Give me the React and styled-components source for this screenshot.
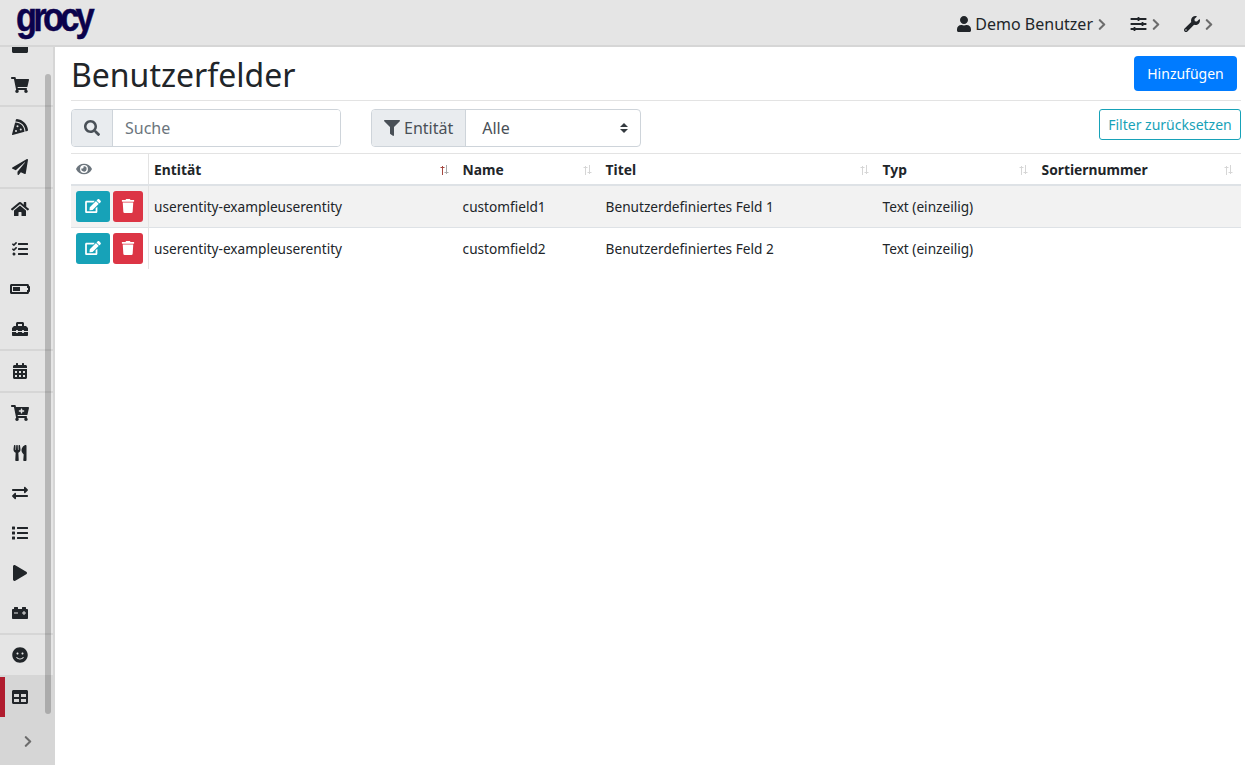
import React from 'react'
import styled, {createGlobalStyle} from 'styled-components'
import {
  FaBox, FaShoppingCart, FaPizzaSlice, FaPaperPlane, FaHome, FaTasks, FaBatteryHalf, FaToolbox,
  FaCalendarAlt, FaCartPlus, FaUtensils, FaExchangeAlt, FaList, FaPlay, FaCarBattery, FaSmile, FaTable,
  FaUser, FaSlidersH, FaWrench, FaChevronRight, FaSearch, FaFilter, FaEye, FaEdit, FaTrash
} from 'react-icons/fa'

const GlobalStyle = createGlobalStyle`
  html, body {
    margin: 0;
    padding: 0;
    height: 100%;
    overflow: hidden;
    background: #fff;
    color: #212529;
    font-family: "Noto Sans", "Open Sans", sans-serif;
    font-size: 14px;
  }
  * { box-sizing: border-box; }
`

const navGroups = [
  [FaBox, FaShoppingCart],
  [FaPizzaSlice, FaPaperPlane],
  [FaHome, FaTasks, FaBatteryHalf, FaToolbox],
  [FaCalendarAlt],
  [FaCartPlus, FaUtensils, FaExchangeAlt, FaList, FaPlay, FaCarBattery],
  [FaSmile],
]

const columns = [
  {title: 'Entität', width: 309, active: true},
  {title: 'Name', width: 143},
  {title: 'Titel', width: 277},
  {title: 'Typ', width: 159},
  {title: 'Sortiernummer', width: 205},
]

const rows = [
  ['userentity-exampleuserentity', 'customfield1', 'Benutzerdefiniertes Feld 1', 'Text (einzeilig)', ''],
  ['userentity-exampleuserentity', 'customfield2', 'Benutzerdefiniertes Feld 2', 'Text (einzeilig)', ''],
]

export default function App() {
  return (
    <Page>
      <GlobalStyle />
      <Navbar>
        <Logo>grocy</Logo>
        <NavRight>
          <NavLink $iconWidth={14}><FaUser /><span>Demo Benutzer</span><Chevron /></NavLink>
          <NavLink $iconWidth={17}><FaSlidersH /><Chevron /></NavLink>
          <NavLink $iconWidth={16}><FaWrench /><Chevron /></NavLink>
        </NavRight>
      </Navbar>
      <Body>
        <Sidebar>
          <NavList>
            {navGroups.map((group, i) => (
              <NavGroup key={i}>
                {group.map((Icon, j) => (
                  <NavItem key={j}><Icon /></NavItem>
                ))}
              </NavGroup>
            ))}
            <ActiveItem><FaTable /></ActiveItem>
          </NavList>
          <Collapse><FaChevronRight /></Collapse>
          <ScrollThumb />
        </Sidebar>
        <Main>
          <TitleRow>
            <Title>Benutzerfelder</Title>
            <PrimaryButton>Hinzufügen</PrimaryButton>
          </TitleRow>
          <FilterRow>
            <InputGroup>
              <Addon><FaSearch /></Addon>
              <SearchInput placeholder="Suche" />
            </InputGroup>
            <InputGroup>
              <Addon><FaFilter /><span>Entität</span></Addon>
              <SelectBox>
                <span>Alle</span>
                <svg width="8" height="10" viewBox="0 0 4 5">
                  <path fill="#343a40" d="M2 0L0 2h4zm0 5L0 3h4z" />
                </svg>
              </SelectBox>
            </InputGroup>
            <ResetButton>Filter zurücksetzen</ResetButton>
          </FilterRow>
          <Table>
            <thead>
              <tr>
                <OptionsHead><FaEye /></OptionsHead>
                {columns.map(c => (
                  <HeadCell key={c.title} style={{width: c.width}}>
                    {c.title}
                    <SortIcon active={c.active} />
                  </HeadCell>
                ))}
              </tr>
            </thead>
            <tbody>
              {rows.map((row, i) => (
                <Row key={i} $odd={i === 0}>
                  <ActionCell>
                    <Actions>
                      <IconButton $color="#17a2b8"><FaEdit /></IconButton>
                      <IconButton $color="#dc3545" $narrow><FaTrash /></IconButton>
                    </Actions>
                  </ActionCell>
                  {row.map((cell, j) => <Cell key={j}>{cell}</Cell>)}
                </Row>
              ))}
            </tbody>
          </Table>
        </Main>
      </Body>
    </Page>
  )
}

function Chevron() {
  return <ChevronWrap><FaChevronRight /></ChevronWrap>
}

function SortIcon({active}) {
  return (
    <SortSvg width="9" height="10" viewBox="0 0 9 10" fill="none" strokeWidth="1">
      <path d="M2.5 10V1M0.5 2.5h4" stroke={active ? '#a5473f' : '#d6d6d6'} />
      <path d="M6.5 0v9M4.5 7.5h4" stroke={active ? '#aaa' : '#d6d6d6'} />
    </SortSvg>
  )
}

const Page = styled.div`
  width: 1245px;
  height: 765px;
  display: flex;
  flex-direction: column;
  overflow: hidden;
`

const Navbar = styled.header`
  height: 47px;
  flex: none;
  display: flex;
  align-items: center;
  justify-content: space-between;
  background: #e5e5e5;
  border-bottom: 2px solid #d6d6d6;
  padding: 3px 32px 0 16px;
`

const Logo = styled.div`
  align-self: flex-start;
  margin-top: -1.5px;
  height: 30px;
  font-family: "Liberation Sans", sans-serif;
  font-weight: 700;
  font-size: 41px;
  letter-spacing: -4.5px;
  line-height: 30px;
  color: #0b024c;
  -webkit-text-stroke: 0.5px #0b024c;
  transform: scaleX(0.84);
  transform-origin: left center;
`

const NavRight = styled.div`
  display: flex;
  align-items: center;
  gap: 24px;
`

const NavLink = styled.div`
  display: flex;
  align-items: center;
  gap: 4px;
  font-size: 16px;
  color: #212529;

  > svg {
    height: 16px;
    width: ${props => props.$iconWidth}px;
    display: block;
  }
`

const ChevronWrap = styled.span`
  display: inline-flex;
  color: #6c6c6c;
  margin-left: 1px;

  svg {
    width: 8px;
    height: 13px;
  }
`

const Body = styled.div`
  flex: 1;
  display: flex;
  min-height: 0;
`

const Sidebar = styled.nav`
  position: relative;
  width: 55px;
  flex: none;
  background: #e5e5e5;
  border-right: 2px solid #d6d6d6;
  overflow: hidden;
`

const NavList = styled.div`
  margin-top: -22px;
`

const NavGroup = styled.div`
  border-bottom: 2px solid #d6d6d6;
`

const NavItem = styled.div`
  height: 40px;
  width: 40px;
  display: flex;
  align-items: center;
  justify-content: center;
  color: #212529;

  svg {
    height: 16px;
    width: 20px;
  }
`

const ActiveItem = styled(NavItem)`
  width: 55px;
  padding-right: 15px;
  background: #d6d6d6;
  position: relative;

  &::before {
    content: "";
    position: absolute;
    left: 0;
    top: 0;
    width: 5px;
    height: 40px;
    background: #b01c2e;
  }
`

const Collapse = styled.div`
  height: 48px;
  background: #d6d6d6;
  color: #6c6c6c;
  display: flex;
  align-items: center;
  justify-content: center;
  padding-left: 2px;

  svg {
    width: 8px;
    height: 13px;
  }
`

const ScrollThumb = styled.div`
  position: absolute;
  left: 45px;
  top: 27px;
  width: 6px;
  height: 640px;
  border-radius: 3px;
  background: rgba(0, 0, 0, 0.2);
`

const Main = styled.main`
  flex: 1;
  min-width: 0;
  padding: 0 4px 0 16px;
`

const TitleRow = styled.div`
  height: 54px;
  display: flex;
  align-items: flex-start;
  justify-content: space-between;
  border-bottom: 1px solid #e3e3e3;
  padding-right: 4px;
  padding-top: 9px;
`

const Title = styled.h2`
  margin: 0;
  font-size: 32px;
  font-weight: 400;
  line-height: 38px;
`

const PrimaryButton = styled.button`
  height: 35px;
  width: 103px;
  padding: 0;
  border: none;
  border-radius: 4px;
  background: #007bff;
  color: #fff;
  font: inherit;
`

const FilterRow = styled.div`
  height: 53px;
  display: flex;
  align-items: flex-start;
  gap: 30px;
  padding-top: 8px;
  border-bottom: 1px solid #e3e3e3;
`

const InputGroup = styled.div`
  width: 270px;
  height: 38px;
  display: flex;
  border: 1px solid #ced4da;
  border-radius: 4px;
  overflow: hidden;
  font-size: 16px;
`

const Addon = styled.div`
  display: flex;
  align-items: center;
  gap: 4px;
  padding: 0 12px;
  background: #e9ecef;
  border-right: 1px solid #ced4da;
  color: #495057;

  svg {
    height: 16px;
    width: 16px;
  }
`

const SearchInput = styled.input`
  flex: 1;
  min-width: 0;
  border: none;
  outline: none;
  padding: 0 12px;
  font: inherit;
  color: #495057;

  &::placeholder {
    color: #6c757d;
  }
`

const SelectBox = styled.div`
  flex: 1;
  display: flex;
  align-items: center;
  justify-content: space-between;
  padding: 0 12px 0 16px;
  color: #495057;
`

const ResetButton = styled.button`
  margin-left: auto;
  height: 31px;
  width: 142px;
  padding: 0;
  border: 1px solid #17a2b8;
  border-radius: 3px;
  background: #fff;
  color: #17a2b8;
  font: inherit;
`

const Table = styled.table`
  width: 1170px;
  border-collapse: collapse;
  table-layout: fixed;
`

const OptionsHead = styled.th`
  width: 77px;
  height: 31px;
  padding: 0 5px;
  text-align: left;
  color: #6c757d;
  border-right: 1px solid #e3e3e3;
  border-bottom: 2px solid #dee2e6;

  svg {
    display: block;
    width: 16px;
    height: 14px;
  }
`

const HeadCell = styled.th`
  position: relative;
  padding: 0 5px 0 5.6px;
  text-align: left;
  font-size: 13.8px;
  font-weight: 700;
  border-bottom: 2px solid #dee2e6;
`

const SortSvg = styled.svg`
  position: absolute;
  right: 8px;
  top: 11px;
`

const Row = styled.tr`
  height: 42px;
  background: ${props => props.$odd ? '#f2f2f2' : '#fff'};
  border-bottom: ${props => props.$odd ? '1px solid #dee2e6' : 'none'};
`

const ActionCell = styled.td`
  padding: 0 5px;
  border-right: 1px solid #e3e3e3;
`

const Actions = styled.div`
  display: flex;
  gap: 3px;
`

const IconButton = styled.button`
  width: ${props => props.$narrow ? 30 : 34}px;
  height: 31px;
  border: none;
  border-radius: 3px;
  padding: 0;
  display: flex;
  align-items: center;
  justify-content: center;
  background: ${props => props.$color};
  color: #fff;

  svg {
    width: 16px;
    height: 14px;
  }
`

const Cell = styled.td`
  padding: 0 5px 0 5.6px;
  font-size: 13.65px;
  white-space: nowrap;
`
